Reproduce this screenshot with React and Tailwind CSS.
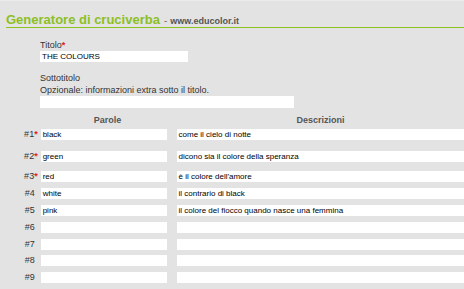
const rows = [
  { n: 1, req: true, w: "black", d: "come il cielo di notte", h: "h-[22px]" },
  { n: 2, req: true, w: "green", d: "dicono sia il colore della speranza", h: "h-[20px]" },
  { n: 3, req: true, w: "red", d: "è il colore dell'amore", h: "h-[17px]" },
  { n: 4, req: false, w: "white", d: "il contrario di black", h: "h-[17px]" },
  { n: 5, req: false, w: "pink", d: "il colore del fiocco quando nasce una femmina", h: "h-[17px]" },
  { n: 6, req: false, w: "", d: "", h: "h-[17px]" },
  { n: 7, req: false, w: "", d: "", h: "h-[16px]" },
  { n: 8, req: false, w: "", d: "", h: "h-[17px]" },
  { n: 9, req: false, w: "", d: "", h: "h-[17px]" },
  { n: 10, req: false, w: "", d: "", h: "h-[17px]" },
];

function Field({ value, className }) {
  return (
    <div
      className={`bg-white h-[11px] flex items-center pl-[2px] text-[8px] leading-none text-black whitespace-nowrap overflow-hidden ${className}`}
    >
      {value}
    </div>
  );
}

export default function App() {
  return (
    <div
      className="w-[464px] h-[289px] overflow-hidden bg-[#e3e3e3] border-t border-[#ececec]"
      style={{ fontFamily: "'Liberation Sans', Arial, sans-serif" }}
    >
      <div className="ml-[6px] mt-[12px] border-b border-[#8dc21f] pb-[1px] flex items-baseline h-[15px]">
        <span className="text-[#8cbf26] font-bold text-[13px] leading-none">
          Generatore di cruciverba
        </span>
        <span className="text-[#777] text-[10px] leading-none ml-[4px]">-</span>
        <span className="text-[#555] font-bold text-[9px] leading-none ml-[3px]">
          www.educolor.it
        </span>
      </div>

      <div className="ml-[40px] mt-[13px]">
        <div className="text-[9px] leading-none text-[#333] h-[9px]">
          Titolo<span className="text-[#e02020] font-bold">*</span>
        </div>
        <Field value="THE COLOURS" className="w-[148px] mt-[1px]" />

        <div className="text-[9px] leading-none text-[#333] mt-[12px] h-[9px]">
          Sottotitolo
        </div>
        <div className="text-[9px] leading-none text-[#333] mt-[3px] h-[9px]">
          Opzionale: informazioni extra sotto il titolo.
        </div>
        <Field value="" className="w-[254px] h-[12px] mt-[1px]" />
      </div>

      <div className="flex mt-[8px] h-[12px] text-[9px] font-bold text-[#555] leading-none">
        <div className="w-[168px] text-center pl-[48px]">Parole</div>
        <div className="w-[290px] ml-[10px] text-center">Descrizioni</div>
      </div>

      <div className="mt-[1px]">
        {rows.map((r) => (
          <div key={r.n} className={`flex items-start ${r.h}`}>
            <div className="w-[39px] text-right text-[9px] leading-[11px] text-[#333] pr-[1px]">
              #{r.n}
              {r.req ? <span className="text-[#e02020] font-bold">*</span> : <span className="inline-block w-[3px]" />}
            </div>
            <Field value={r.w} className="w-[127px] ml-[2px]" />
            <Field value={r.d} className="w-[290px] ml-[10px]" />
          </div>
        ))}
      </div>
    </div>
  );
}
